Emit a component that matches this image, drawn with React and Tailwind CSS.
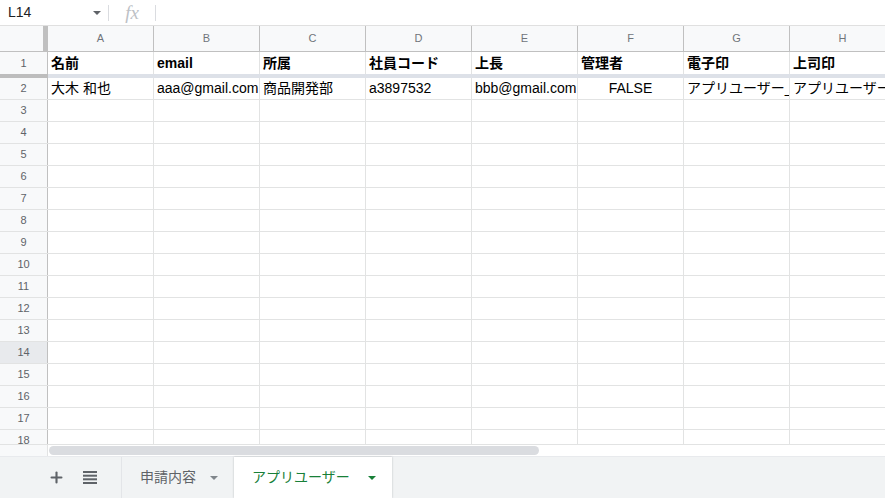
import React from 'react';
import { Plus } from 'lucide-react';

const cols = ['A', 'B', 'C', 'D', 'E', 'F', 'G', 'H'];

const headerRow = ['名前', 'email', '所属', '社員コード', '上長', '管理者', '電子印', '上司印'];
const dataRow = [
  '大木 和也',
  'aaa@gmail.com',
  '商品開発部',
  'a3897532',
  'bbb@gmail.com',
  'FALSE',
  'アプリユーザー_電子印',
  'アプリユーザー_上司印',
];

const emptyRows = Array.from({ length: 16 }, (_, i) => i + 3);

const Caret = ({ className }) => (
  <svg width="8" height="4" viewBox="0 0 8 4" className={className}>
    <path d="M0 0h8L4 4z" fill="currentColor" />
  </svg>
);

const RowHead = ({ n, active }) => (
  <div
    className={`w-[48px] shrink-0 border-r border-[#c0c0c0] flex items-center justify-center text-[11px] text-[#5f6368] ${
      active ? 'bg-[#e8eaed]' : 'bg-[#f8f9fa]'
    }`}
  >
    {n}
  </div>
);

const Cell = ({ children, bold, center }) => (
  <div
    className={`w-[106px] shrink-0 border-r border-[#e2e3e3] flex items-center overflow-hidden whitespace-nowrap text-[14px] text-[#000] ${
      center ? 'justify-center' : 'pl-[3px]'
    } ${bold ? 'font-bold' : ''}`}
  >
    {children}
  </div>
);

export default function App() {
  return (
    <div className="w-[885px] h-[498px] overflow-hidden bg-white flex flex-col font-['Liberation_Sans','Noto_Sans_CJK_JP',sans-serif]">
      {/* formula bar */}
      <div className="h-[26px] shrink-0 border-b border-[#e0e0e0] flex items-center">
        <div className="w-[108px] h-full flex items-center justify-between pl-[8px] pr-[7px] text-[14px] text-[#202124]">
          <span>L14</span>
          <Caret className="text-[#5f6368]" />
        </div>
        <div className="w-px h-[16px] bg-[#dadce0]" />
        <div className="w-[46px] flex items-center justify-center font-['Liberation_Serif',serif] italic text-[19px] text-[#bdc1c6] leading-none">
          fx
        </div>
        <div className="w-px h-[16px] bg-[#dadce0]" />
      </div>

      {/* grid */}
      <div className="h-[418px] shrink-0 overflow-hidden">
        <div className="h-[26px] flex border-b border-[#c0c0c0] bg-[#f8f9fa]">
          <div className="w-[48px] shrink-0 flex">
            <div className="w-[43px]" />
            <div className="w-[5px] bg-[#c0c0c0]" />
          </div>
          {cols.map((c) => (
            <div
              key={c}
              className="w-[106px] shrink-0 border-r border-[#c0c0c0] flex items-center justify-center text-[11px] text-[#70757a]"
            >
              {c}
            </div>
          ))}
        </div>

        <div className="h-[22px] flex">
          <RowHead n={1} />
          {headerRow.map((t, i) => (
            <Cell key={i} bold>
              {t}
            </Cell>
          ))}
        </div>

        <div className="h-[4px] flex">
          <div className="w-[48px] shrink-0 bg-[#bdbdbd]" />
          <div className="flex-1 bg-[#dde1e8]" />
        </div>

        <div className="h-[22px] flex border-b border-[#e2e3e3]">
          <RowHead n={2} />
          {dataRow.map((t, i) => (
            <Cell key={i} center={t === 'FALSE'}>
              {t}
            </Cell>
          ))}
        </div>

        {emptyRows.map((n) => (
          <div key={n} className="h-[22px] flex border-b border-[#e2e3e3]">
            <RowHead n={n} active={n === 14} />
            {cols.map((c) => (
              <Cell key={c} />
            ))}
          </div>
        ))}
      </div>

      {/* horizontal scrollbar */}
      <div className="h-[12px] shrink-0 flex border-t border-[#e2e3e3]">
        <div className="w-[48px] shrink-0 bg-[#f8f9fa] border-r border-[#e2e3e3]" />
        <div className="flex-1 flex items-center pl-px">
          <div className="w-[490px] h-[9px] rounded-full bg-[#dadce0]" />
        </div>
      </div>

      {/* sheet tabs */}
      <div className="h-[42px] shrink-0 flex bg-[#f1f3f4] border-t border-[#e8eaed]">
        <div className="w-[122px] shrink-0 flex items-center border-r border-[#e3e5e8]">
          <div className="w-[122px] flex items-center justify-end gap-[18px] pr-[24px]">
            <Plus size={17} strokeWidth={3} className="text-[#5f6368]" />
            <svg width="14" height="13" viewBox="0 0 14 13" className="text-[#5f6368]">
              <rect x="0" y="0" width="14" height="2" fill="currentColor" />
              <rect x="0" y="3.7" width="14" height="2" fill="currentColor" />
              <rect x="0" y="7.3" width="14" height="2" fill="currentColor" />
              <rect x="0" y="11" width="14" height="2" fill="currentColor" />
            </svg>
          </div>
        </div>
        <div className="w-[112px] shrink-0 flex items-center pl-[18px] gap-[14px] text-[14px] text-[#5f6368]">
          <span>申請内容</span>
          <Caret className="text-[#80868b]" />
        </div>
        <div className="w-[158px] shrink-0 flex items-center pl-[18px] gap-[18px] bg-white text-[14px] text-[#188038] shadow-[0_0_2px_rgba(60,64,67,0.3)]">
          <span>アプリユーザー</span>
          <Caret className="text-[#188038]" />
        </div>
      </div>
    </div>
  );
}
